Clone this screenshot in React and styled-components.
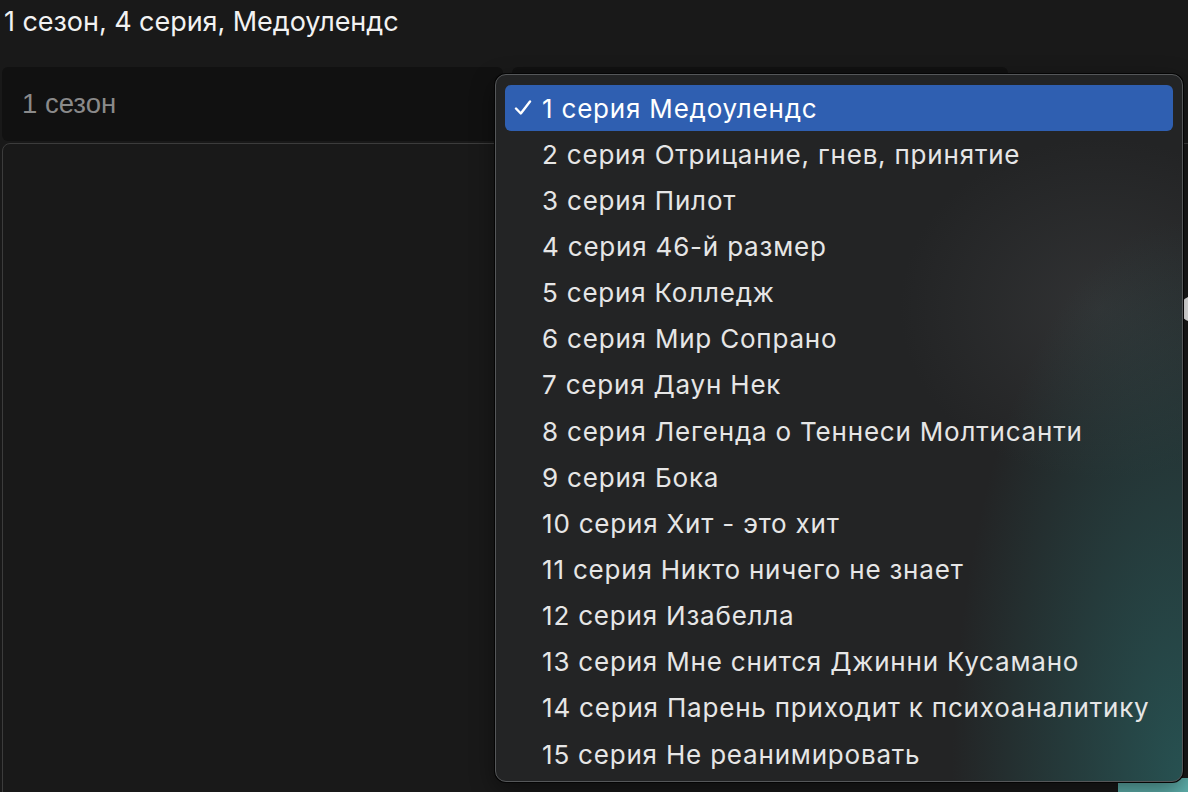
import React from 'react'
import styled, { createGlobalStyle } from 'styled-components'

const GlobalStyle = createGlobalStyle`
  html, body {
    margin: 0;
    padding: 0;
    background: #191919;
    overflow: hidden;
  }
  body {
    width: 1188px;
    height: 792px;
    font-family: Inter, 'Noto Sans', sans-serif;
  }
`

const Page = styled.div`
  position: relative;
  width: 1188px;
  height: 792px;
  overflow: hidden;
  background: #191919;
`

const Heading = styled.h1`
  margin: 0;
  padding: 0 0 0 4px;
  height: 67px;
  line-height: 44px;
  font-family: Inter, sans-serif;
  font-weight: 400;
  font-size: 27px;
  color: #f2f2f2;
  letter-spacing: -0.05px;
`

const SelectRow = styled.div`
  display: flex;
  gap: 9px;
  padding-left: 2px;
  width: 1006px;
`

const Select = styled.div`
  flex: ${p => p.$grow};
  height: 74px;
  display: flex;
  align-items: center;
  padding-left: 20px;
  border-radius: 6px;
  background: #111111;
  color: #8a8a8a;
  font-family: 'Liberation Sans', Arial, sans-serif;
  font-size: 27.5px;
`

const Panel = styled.div`
  display: grid;
  grid-template-columns: 1115px 120px;
  margin: 2px 0 0 2px;
  width: 1300px;
  height: 760px;
  border: 1px solid #3c3c3c;
  border-radius: 8px;
  background: #191919;
`

const SideColumn = styled.div`
  grid-column: 2;
  display: flex;
  flex-direction: column;
  gap: 456px;
  padding-top: 152px;
`

const Knob = styled.div`
  margin-left: 62px;
  width: 26px;
  height: 26px;
  border-radius: 50%;
  background: #f0f0f0;
`

const Tile = styled.div`
  width: 120px;
  height: 120px;
  background: #5fb1ad;
`

const Menu = styled.ul`
  position: absolute;
  left: 495px;
  top: 74px;
  width: 688px;
  height: 708px;
  box-sizing: border-box;
  margin: 0;
  padding: 10px 9px 8px;
  list-style: none;
  border-radius: 11px;
  border: 1px solid #555759;
  box-shadow: 0 0 0 1px #050505, 0 8px 24px rgba(0, 0, 0, 0.45);
  background:
    radial-gradient(ellipse 230px 560px at 100% 100%, rgba(40, 92, 92, 0.8), rgba(40, 92, 92, 0) 100%),
    radial-gradient(ellipse 200px 170px at 88% 33%, rgba(62, 64, 66, 0.5), rgba(62, 64, 66, 0) 100%),
    #232425;
`

const Item = styled.li`
  position: relative;
  height: 46.15px;
  display: flex;
  align-items: center;
  padding-left: 37px;
  border-radius: 6px;
  font-family: Inter, 'Noto Sans', sans-serif;
  font-size: 26px;
  letter-spacing: 0.8px;
  color: ${p => (p.$active ? '#ffffff' : '#e6e6e6')};
  background: ${p => (p.$active ? '#2f5fb1' : 'transparent')};
`

const Check = styled.svg`
  position: absolute;
  left: 9px;
  top: 15px;
`

const episodes = [
  'Медоулендс',
  'Отрицание, гнев, принятие',
  'Пилот',
  '46-й размер',
  'Колледж',
  'Мир Сопрано',
  'Даун Нек',
  'Легенда о Теннеси Молтисанти',
  'Бока',
  'Хит - это хит',
  'Никто ничего не знает',
  'Изабелла',
  'Мне снится Джинни Кусамано',
  'Парень приходит к психоаналитику',
  'Не реанимировать',
]

export default function App() {
  return (
    <Page>
      <GlobalStyle />
      <Heading>1 сезон, 4 серия, Медоулендс</Heading>
      <SelectRow>
        <Select $grow="501">1 сезон</Select>
        <Select $grow="496" />
      </SelectRow>
      <Panel>
        <SideColumn>
          <Knob />
          <Tile />
        </SideColumn>
      </Panel>
      <Menu>
        {episodes.map((name, i) => (
          <Item key={i} $active={i === 0}>
            {i === 0 && (
              <Check width="18" height="16" viewBox="0 0 18 16">
                <path d="M2 8.5 L6.8 13.5 L16 1.5" fill="none" stroke="#fff" strokeWidth="2.4" strokeLinecap="round" strokeLinejoin="round" />
              </Check>
            )}
            {i + 1} серия {name}
          </Item>
        ))}
      </Menu>
    </Page>
  )
}
